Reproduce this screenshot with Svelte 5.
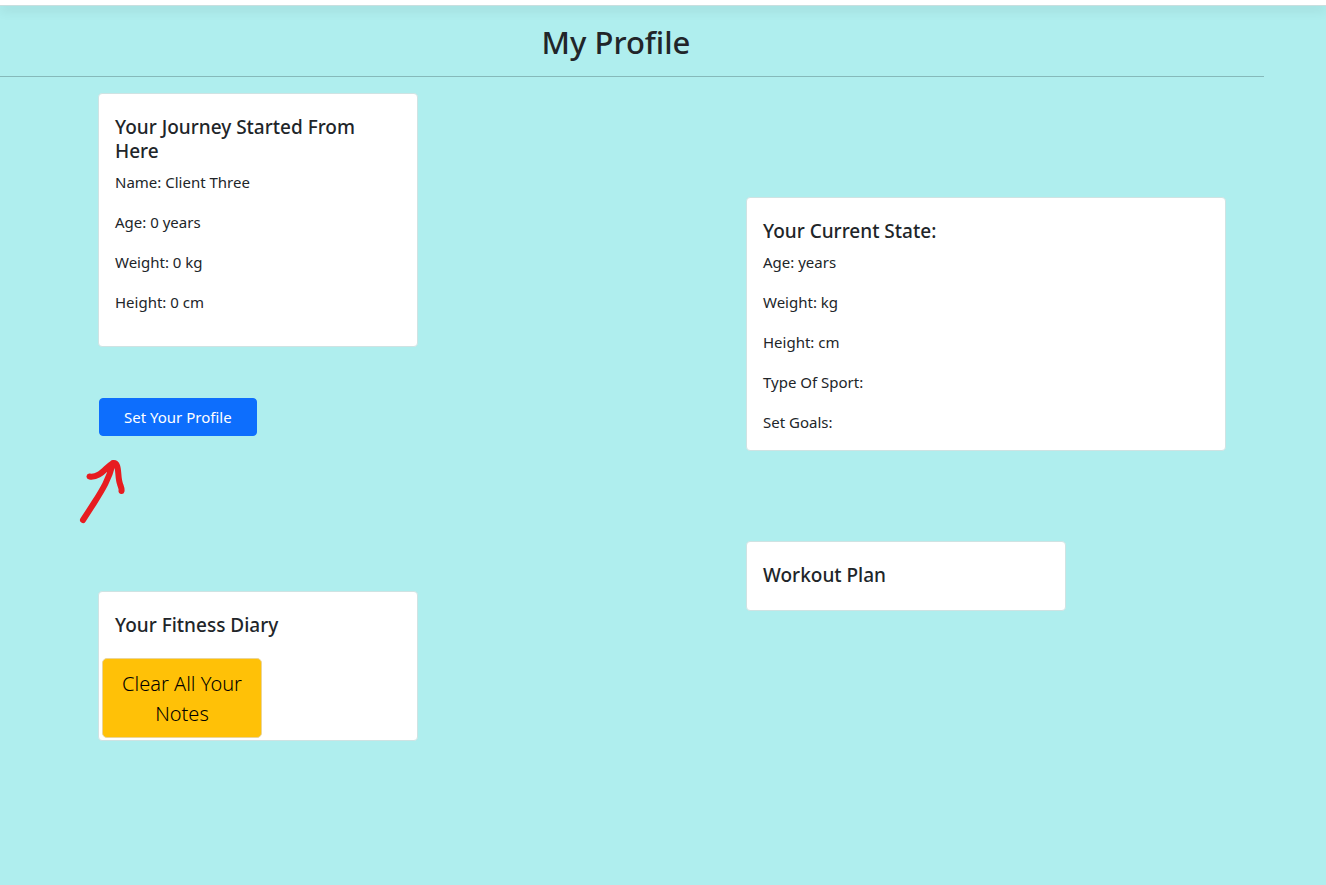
<script>
  const started = ['Name: Client Three', 'Age: 0 years', 'Weight: 0 kg', 'Height: 0 cm'];
  const current = ['Age: years', 'Weight: kg', 'Height: cm', 'Type Of Sport:', 'Set Goals:'];
</script>

<div class="navbar"></div>
<header>
  <h1>My Profile</h1>
</header>
<main>
  <div class="column">
    <section class="card journey">
      <h2>Your Journey Started From Here</h2>
      {#each started as line}
        <p>{line}</p>
      {/each}
    </section>
    <button class="primary" type="button">Set Your Profile</button>
    <svg class="arrow" width="54" height="74" viewBox="0 0 54 74" aria-hidden="true">
      <path d="M7 66L18 49C27 35 33 25 37 9M13.500 22.500C24 24 29 14 37 9C44 8 41 22 44 30C45 33 46 35 45.500 37" />
    </svg>
    <section class="card diary">
      <h2>Your Fitness Diary</h2>
      <button class="warning" type="button">Clear All Your Notes</button>
    </section>
  </div>
  <div class="column side">
    <section class="card state">
      <h2>Your Current State:</h2>
      {#each current as line}
        <p>{line}</p>
      {/each}
    </section>
    <section class="card workout">
      <h2>Workout Plan</h2>
    </section>
  </div>
</main>

<style>
  :global(body) {
    margin: 0;
    min-height: 100vh;
    background: #afeeee;
    color: #212529;
    font-family: 'Segoe UI', 'Noto Sans', sans-serif;
    font-size: 15px;
    line-height: 24px;
  }

  .navbar {
    height: 5px;
    background: #fff;
    border-bottom: 1px solid #c8dfdf;
    box-shadow: 0 4px 12px rgba(0, 0, 0, 0.1);
  }

  header {
    margin-right: 62px;
    padding: 15px 32px 13px 0;
    border-bottom: 1px solid #86b9ba;
    text-align: center;
  }

  h1 {
    margin: 0;
    font-size: 31px;
    font-weight: 500;
    line-height: 42px;
  }

  main {
    display: grid;
    grid-template-columns: 648fr 580fr;
    padding: 16px 0 32px 98px;
  }

  .column {
    display: flex;
    flex-direction: column;
    align-items: flex-start;
  }

  .side {
    padding-top: 104px;
  }

  .card {
    box-sizing: border-box;
    width: 320px;
    max-width: 100%;
    padding: 21px 16px 16px;
    background: #fff;
    border: 1px solid #cfe3e3;
    border-radius: 4px;
  }

  .state {
    width: 480px;
    padding-bottom: 0;
  }

  .workout {
    margin-top: 90px;
  }

  .diary {
    margin-top: 63px;
    padding-bottom: 2px;
  }

  h2 {
    margin: 0 0 7px;
    font-size: 19px;
    font-weight: 500;
    line-height: 24px;
  }

  p {
    margin: 0 0 16px;
  }

  button {
    font-family: inherit;
    cursor: pointer;
  }

  .primary {
    margin: 51px 0 0 1px;
    padding: 6px 24px;
    background: #0d6efd;
    border: 1px solid #0d6efd;
    border-radius: 4px;
    color: #fff;
    font-size: 15px;
    line-height: 24px;
  }

  .arrow {
    margin: 18px 0 0 -22px;
    fill: none;
    stroke: #e71c20;
    stroke-width: 6;
    stroke-linecap: round;
    stroke-linejoin: round;
  }

  .warning {
    display: block;
    width: 160px;
    margin: 21px 0 0 -13px;
    padding: 10px 16px 8px;
    background: #ffc107;
    border: 1px solid #ead59a;
    border-radius: 5px;
    color: #000;
    font-size: 20px;
    font-weight: 300;
    line-height: 30px;
  }
</style>
